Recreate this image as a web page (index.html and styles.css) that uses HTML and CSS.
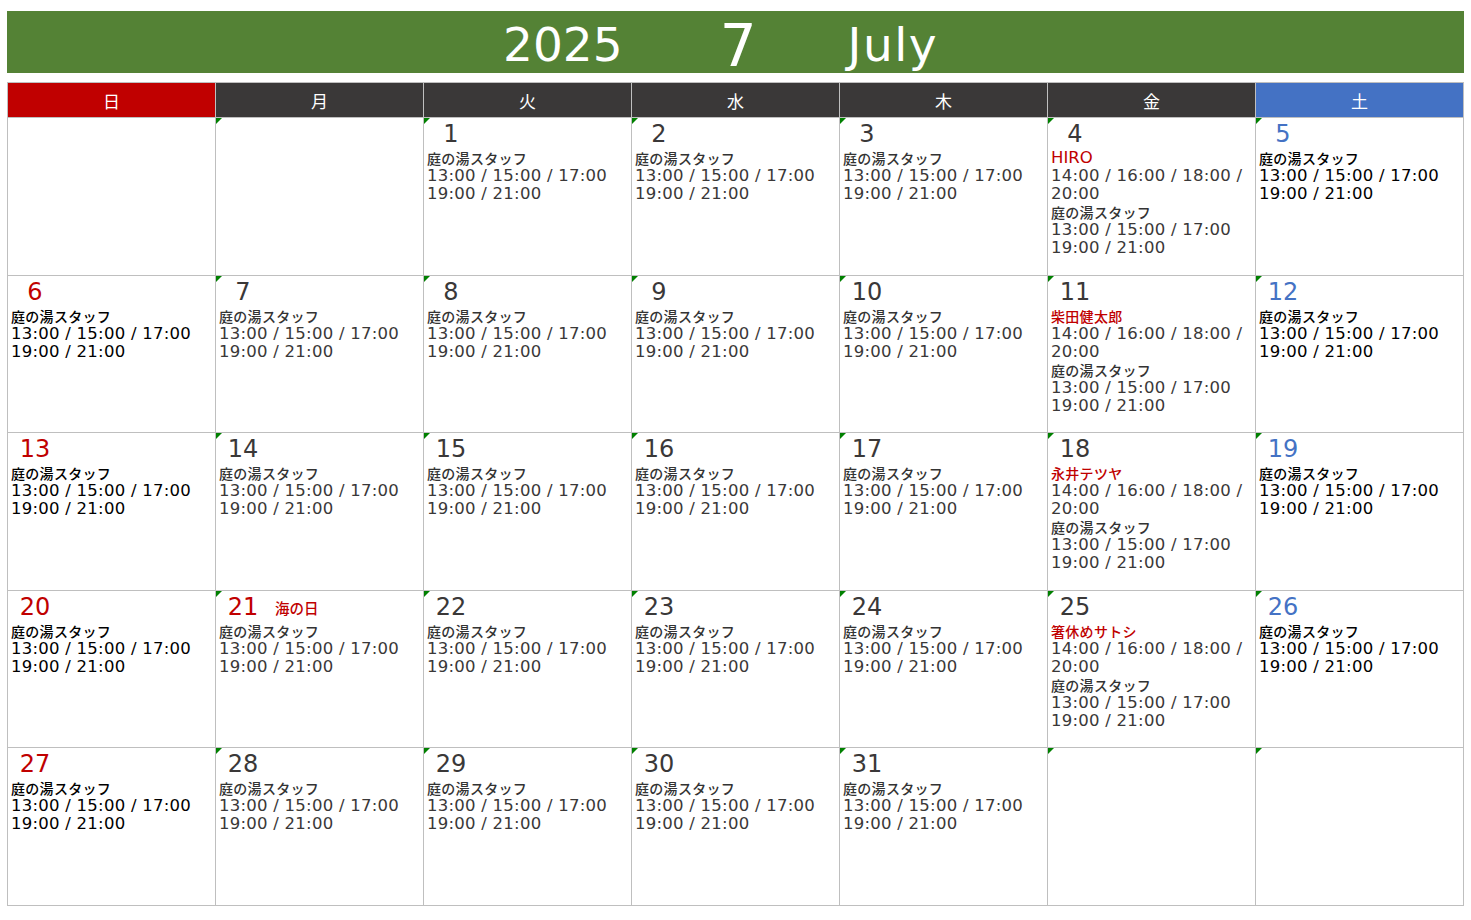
FILE: index.html
```html
<!DOCTYPE html>
<html lang="ja">
<head>
    <meta charset="UTF-8">
    <title>2025年7月 カレンダー</title>
    <link rel="stylesheet" href="styles.css">
</head>
<body>
    <div class="sheet">
        <div class="title">
            <span class="year">2025</span>
            <span class="month">7</span>
            <span class="month-en">July</span>
        </div>

        <div class="cal">
            <div class="dow dow-sun">日</div>
            <div class="dow">月</div>
            <div class="dow">火</div>
            <div class="dow">水</div>
            <div class="dow">木</div>
            <div class="dow">金</div>
            <div class="dow dow-sat">土</div>

            <!-- week 1 -->
            <div class="cell sun"></div>
            <div class="cell"></div>
            <div class="cell">
                <div class="day"><span class="num">1</span></div>
                <div class="staff">庭の湯スタッフ</div>
                <div class="times">13:00 / 15:00 / 17:00<br>19:00 / 21:00</div>
            </div>
            <div class="cell">
                <div class="day"><span class="num">2</span></div>
                <div class="staff">庭の湯スタッフ</div>
                <div class="times">13:00 / 15:00 / 17:00<br>19:00 / 21:00</div>
            </div>
            <div class="cell">
                <div class="day"><span class="num">3</span></div>
                <div class="staff">庭の湯スタッフ</div>
                <div class="times">13:00 / 15:00 / 17:00<br>19:00 / 21:00</div>
            </div>
            <div class="cell">
                <div class="day"><span class="num">4</span></div>
                <div class="guest latin">HIRO</div>
                <div class="times">14:00 / 16:00 / 18:00 /<br>20:00</div>
                <div class="staff">庭の湯スタッフ</div>
                <div class="times">13:00 / 15:00 / 17:00<br>19:00 / 21:00</div>
            </div>
            <div class="cell sat">
                <div class="day"><span class="num">5</span></div>
                <div class="staff">庭の湯スタッフ</div>
                <div class="times">13:00 / 15:00 / 17:00<br>19:00 / 21:00</div>
            </div>

            <!-- week 2 -->
            <div class="cell sun">
                <div class="day"><span class="num">6</span></div>
                <div class="staff">庭の湯スタッフ</div>
                <div class="times">13:00 / 15:00 / 17:00<br>19:00 / 21:00</div>
            </div>
            <div class="cell">
                <div class="day"><span class="num">7</span></div>
                <div class="staff">庭の湯スタッフ</div>
                <div class="times">13:00 / 15:00 / 17:00<br>19:00 / 21:00</div>
            </div>
            <div class="cell">
                <div class="day"><span class="num">8</span></div>
                <div class="staff">庭の湯スタッフ</div>
                <div class="times">13:00 / 15:00 / 17:00<br>19:00 / 21:00</div>
            </div>
            <div class="cell">
                <div class="day"><span class="num">9</span></div>
                <div class="staff">庭の湯スタッフ</div>
                <div class="times">13:00 / 15:00 / 17:00<br>19:00 / 21:00</div>
            </div>
            <div class="cell">
                <div class="day"><span class="num">10</span></div>
                <div class="staff">庭の湯スタッフ</div>
                <div class="times">13:00 / 15:00 / 17:00<br>19:00 / 21:00</div>
            </div>
            <div class="cell">
                <div class="day"><span class="num">11</span></div>
                <div class="guest">柴田健太郎</div>
                <div class="times">14:00 / 16:00 / 18:00 /<br>20:00</div>
                <div class="staff">庭の湯スタッフ</div>
                <div class="times">13:00 / 15:00 / 17:00<br>19:00 / 21:00</div>
            </div>
            <div class="cell sat">
                <div class="day"><span class="num">12</span></div>
                <div class="staff">庭の湯スタッフ</div>
                <div class="times">13:00 / 15:00 / 17:00<br>19:00 / 21:00</div>
            </div>

            <!-- week 3 -->
            <div class="cell sun">
                <div class="day"><span class="num">13</span></div>
                <div class="staff">庭の湯スタッフ</div>
                <div class="times">13:00 / 15:00 / 17:00<br>19:00 / 21:00</div>
            </div>
            <div class="cell">
                <div class="day"><span class="num">14</span></div>
                <div class="staff">庭の湯スタッフ</div>
                <div class="times">13:00 / 15:00 / 17:00<br>19:00 / 21:00</div>
            </div>
            <div class="cell">
                <div class="day"><span class="num">15</span></div>
                <div class="staff">庭の湯スタッフ</div>
                <div class="times">13:00 / 15:00 / 17:00<br>19:00 / 21:00</div>
            </div>
            <div class="cell">
                <div class="day"><span class="num">16</span></div>
                <div class="staff">庭の湯スタッフ</div>
                <div class="times">13:00 / 15:00 / 17:00<br>19:00 / 21:00</div>
            </div>
            <div class="cell">
                <div class="day"><span class="num">17</span></div>
                <div class="staff">庭の湯スタッフ</div>
                <div class="times">13:00 / 15:00 / 17:00<br>19:00 / 21:00</div>
            </div>
            <div class="cell">
                <div class="day"><span class="num">18</span></div>
                <div class="guest">永井テツヤ</div>
                <div class="times">14:00 / 16:00 / 18:00 /<br>20:00</div>
                <div class="staff">庭の湯スタッフ</div>
                <div class="times">13:00 / 15:00 / 17:00<br>19:00 / 21:00</div>
            </div>
            <div class="cell sat">
                <div class="day"><span class="num">19</span></div>
                <div class="staff">庭の湯スタッフ</div>
                <div class="times">13:00 / 15:00 / 17:00<br>19:00 / 21:00</div>
            </div>

            <!-- week 4 -->
            <div class="cell sun">
                <div class="day"><span class="num">20</span></div>
                <div class="staff">庭の湯スタッフ</div>
                <div class="times">13:00 / 15:00 / 17:00<br>19:00 / 21:00</div>
            </div>
            <div class="cell holiday">
                <div class="day"><span class="num">21</span><span class="hol">海の日</span></div>
                <div class="staff">庭の湯スタッフ</div>
                <div class="times">13:00 / 15:00 / 17:00<br>19:00 / 21:00</div>
            </div>
            <div class="cell">
                <div class="day"><span class="num">22</span></div>
                <div class="staff">庭の湯スタッフ</div>
                <div class="times">13:00 / 15:00 / 17:00<br>19:00 / 21:00</div>
            </div>
            <div class="cell">
                <div class="day"><span class="num">23</span></div>
                <div class="staff">庭の湯スタッフ</div>
                <div class="times">13:00 / 15:00 / 17:00<br>19:00 / 21:00</div>
            </div>
            <div class="cell">
                <div class="day"><span class="num">24</span></div>
                <div class="staff">庭の湯スタッフ</div>
                <div class="times">13:00 / 15:00 / 17:00<br>19:00 / 21:00</div>
            </div>
            <div class="cell">
                <div class="day"><span class="num">25</span></div>
                <div class="guest">箸休めサトシ</div>
                <div class="times">14:00 / 16:00 / 18:00 /<br>20:00</div>
                <div class="staff">庭の湯スタッフ</div>
                <div class="times">13:00 / 15:00 / 17:00<br>19:00 / 21:00</div>
            </div>
            <div class="cell sat">
                <div class="day"><span class="num">26</span></div>
                <div class="staff">庭の湯スタッフ</div>
                <div class="times">13:00 / 15:00 / 17:00<br>19:00 / 21:00</div>
            </div>

            <!-- week 5 -->
            <div class="cell sun">
                <div class="day"><span class="num">27</span></div>
                <div class="staff">庭の湯スタッフ</div>
                <div class="times">13:00 / 15:00 / 17:00<br>19:00 / 21:00</div>
            </div>
            <div class="cell">
                <div class="day"><span class="num">28</span></div>
                <div class="staff">庭の湯スタッフ</div>
                <div class="times">13:00 / 15:00 / 17:00<br>19:00 / 21:00</div>
            </div>
            <div class="cell">
                <div class="day"><span class="num">29</span></div>
                <div class="staff">庭の湯スタッフ</div>
                <div class="times">13:00 / 15:00 / 17:00<br>19:00 / 21:00</div>
            </div>
            <div class="cell">
                <div class="day"><span class="num">30</span></div>
                <div class="staff">庭の湯スタッフ</div>
                <div class="times">13:00 / 15:00 / 17:00<br>19:00 / 21:00</div>
            </div>
            <div class="cell">
                <div class="day"><span class="num">31</span></div>
                <div class="staff">庭の湯スタッフ</div>
                <div class="times">13:00 / 15:00 / 17:00<br>19:00 / 21:00</div>
            </div>
            <div class="cell"></div>
            <div class="cell sat"></div>
        </div>
    </div>
</body>
</html>
```

FILE: styles.css
```css
:root {
    --green: #548235;
    --red: #c00000;
    --blue: #4472c4;
    --dark: #3a3838;
    --grid: #bfbfbf;
}

body {
    margin: 0;
    background: #fff;
    font-family: "DejaVu Sans", "Noto Sans CJK JP", sans-serif;
    color: var(--dark);
}

.sheet {
    padding: 11px 7px;
}

/* title bar */
.title {
    box-sizing: border-box;
    width: 1457px;
    height: 62px;
    padding-top: 4px;
    background: var(--green);
    color: #fff;
    display: flex;
    align-items: center;
}

.year {
    font-size: 47px;
    line-height: 47px;
    margin-left: 496px;
}

.month {
    font-size: 58px;
    line-height: 58px;
    margin-left: 97px;
    margin-top: 4px;
}

.month-en {
    font-size: 47px;
    line-height: 47px;
    letter-spacing: 1.5px;
    margin-left: 91px;
}

/* calendar grid */
.cal {
    display: grid;
    grid-template-columns: repeat(7, 207px);
    grid-template-rows: 34px 157px 156px 157px 156px 157px;
    gap: 1px;
    width: max-content;
    margin-top: 9px;
    background: var(--grid);
    border: 1px solid var(--grid);
}

.dow {
    display: flex;
    align-items: center;
    justify-content: center;
    background: var(--dark);
    color: #fff;
    font-family: "Noto Sans CJK JP", sans-serif;
    font-size: 17px;
}

.dow-sun {
    background: var(--red);
}

.dow-sat {
    background: var(--blue);
}

.cell {
    position: relative;
    background: #fff;
    padding: 2px 3px 0;
    overflow: hidden;
}

/* little green marker in the corner */
.cell::before {
    content: "";
    position: absolute;
    top: 0;
    left: 0;
    border-top: 6px solid #008000;
    border-right: 6px solid transparent;
}

.cell.sun::before {
    display: none;
}

.day {
    display: flex;
    align-items: baseline;
    height: 29px;
}

.num {
    width: 40px;
    margin-left: 4px;
    text-align: center;
    font-size: 24px;
    line-height: 29px;
    color: var(--dark);
}

.sun .num,
.holiday .num {
    color: var(--red);
}

.sat .num {
    color: var(--blue);
}

.hol {
    align-self: center;
    margin-left: 12px;
    font-family: "Noto Sans CJK JP", sans-serif;
    font-size: 14.5px;
    font-weight: 500;
    color: var(--red);
}

.staff,
.guest {
    font-family: "Noto Sans CJK JP", sans-serif;
    font-size: 14px;
    letter-spacing: 0.3px;
    font-weight: 500;
    line-height: 18px;
}

.staff {
    color: #333;
}

.guest {
    color: var(--red);
}

.guest.latin {
    font-family: "DejaVu Sans", sans-serif;
    font-size: 16.5px;
    letter-spacing: 0;
    font-weight: normal;
}

.times {
    font-size: 16.5px;
    letter-spacing: 0.25px;
    line-height: 18px;
}

.sun .staff,
.sun .times,
.sat .staff,
.sat .times {
    color: #000;
}
```
